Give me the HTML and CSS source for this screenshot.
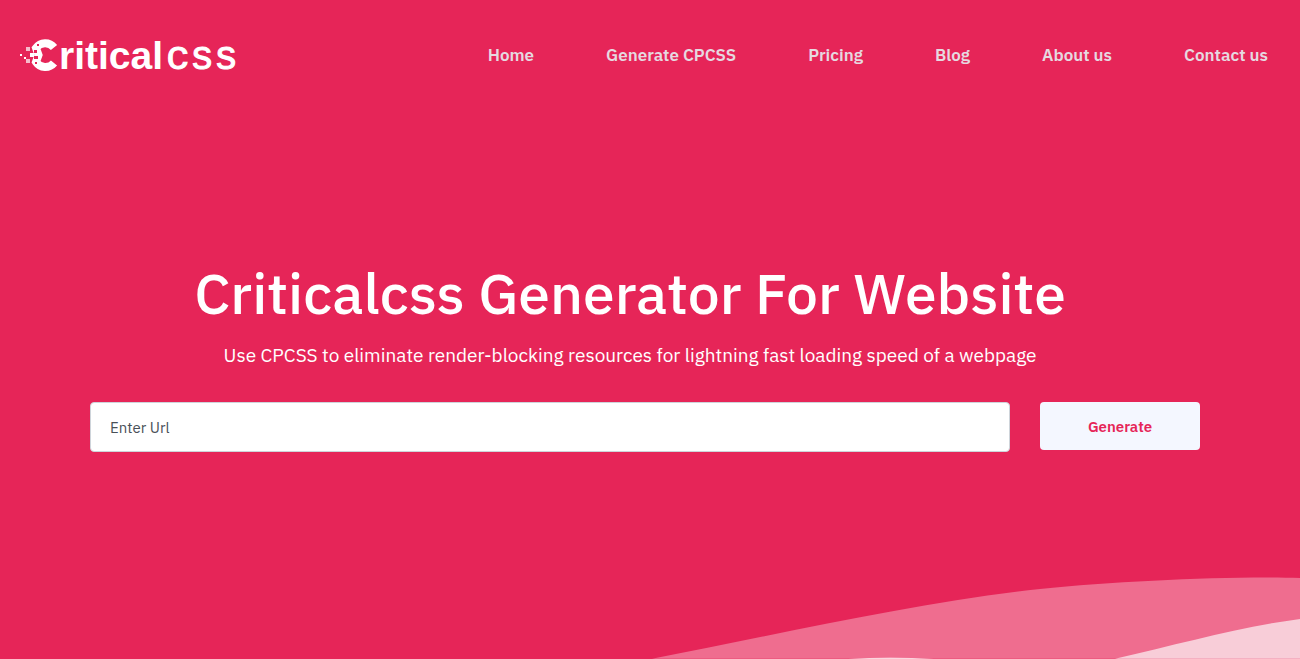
FILE: index.html
```html
<!DOCTYPE html>
<html lang="en">
<head>
  <meta charset="utf-8">
  <meta name="viewport" content="width=device-width, initial-scale=1">
  <title>Criticalcss Generator</title>
  <link rel="stylesheet" href="styles.css">
</head>
<body>
  <div class="page">
    <svg class="waves" viewBox="0 0 1300 99" preserveAspectRatio="none" aria-hidden="true">
      <path class="wave-back" d="M652 99C780 74 920 42 1040 29C1120 21 1230 16 1300 18V99Z"/>
      <path class="wave-mid" d="M1115 99C1180 84 1240 67 1300 59V99Z"/>
      <path class="wave-front" d="M848 99Q890 97 934 99Z"/>
    </svg>
    <header class="header">
      <a class="logo" href="#" aria-label="Criticalcss">
        <svg class="logo-art" viewBox="0 0 230 44">
          <path class="logo-arc" d="M34 12.500A11.500 12 0 0 0 16 13L18.500 20L16 27A11.500 12 0 0 0 34 28"/>
          <g class="logo-gap">
            <rect x="17" y="9" width="2" height="2"/>
            <rect x="14" y="15" width="3" height="3"/>
            <rect x="14" y="21" width="4" height="3"/>
            <rect x="15" y="27" width="2" height="2"/>
          </g>
          <rect class="logo-soft" x="6" y="12" width="4" height="4"/>
          <rect class="logo-soft" x="6" y="24" width="4" height="4"/>
          <g class="logo-solid">
            <rect x="0" y="19" width="2" height="2"/>
            <rect x="4" y="22" width="2" height="2"/>
            <rect x="10" y="18" width="4" height="4"/>
            <rect x="18" y="20" width="2" height="2"/>
          </g>
          <text class="logo-bold" x="39" y="34">ritical</text>
          <text class="logo-mono" x="146" y="34">css</text>
        </svg>
      </a>
      <nav class="nav">
        <a href="#">Home</a>
        <a href="#">Generate CPCSS</a>
        <a href="#">Pricing</a>
        <a href="#">Blog</a>
        <a href="#">About us</a>
        <a href="#">Contact us</a>
      </nav>
    </header>
    <main class="hero">
      <h1 class="title">Criticalcss Generator For Website</h1>
      <p class="lead">Use CPCSS to eliminate render-blocking resources for lightning fast loading speed of a webpage</p>
      <form class="form">
        <input class="field" type="url" aria-label="Enter Url" placeholder="Enter Url">
        <button class="submit" type="button">Generate</button>
      </form>
    </main>
  </div>
</body>
</html>
```
FILE: styles.css
```css
* {
  box-sizing: border-box;
}

body {
  margin: 0;
  background: #e62558;
  color: #fff;
  font-family: "IBM Plex Sans", Inter, "Noto Sans", sans-serif;
}

.page {
  position: relative;
  min-height: 100vh;
  overflow: hidden;
}

.waves {
  position: absolute;
  left: 0;
  bottom: 0;
  width: 100%;
  height: 15vh;
}

.wave-back { fill: #ef6d8f; }
.wave-mid { fill: #f8cdd8; }
.wave-front { fill: #fff; }

.header {
  position: relative;
  display: flex;
  align-items: center;
  justify-content: space-between;
  padding: 35px 32px 31px 20px;
}

.logo {
  display: block;
}

.logo-art {
  display: block;
  width: 230px;
  height: 44px;
  overflow: visible;
}

.logo-arc {
  fill: none;
  stroke: #fff;
  stroke-width: 8;
}

.logo-gap { fill: #e62558; }
.logo-soft { fill: #f6bccb; }
.logo-solid { fill: #fff; }

.logo-bold {
  fill: #fff;
  font: bold 39px "Liberation Sans", sans-serif;
}

.logo-mono {
  fill: #fff;
  stroke: #fff;
  stroke-width: 1;
  font: 40px "Liberation Mono", monospace;
}

.nav {
  display: flex;
  flex-wrap: wrap;
  gap: 20px 72px;
  padding-bottom: 4px;
}

.nav a {
  color: #e6d9e0;
  font-size: 17px;
  font-weight: 600;
  line-height: 24px;
  text-decoration: none;
}

.hero {
  position: relative;
  padding: 147px 100px 60px 60px;
  text-align: center;
}

.title {
  margin: 0;
  font-size: 57px;
  font-weight: 500;
  line-height: 72px;
}

.lead {
  margin: 12px 0 33px;
  font-size: 19px;
  line-height: 28px;
}

.form {
  display: flex;
  align-items: flex-start;
  gap: 30px;
  padding-left: 30px;
}

.field {
  flex: 1;
  min-width: 0;
  height: 50px;
  padding: 0 19px;
  border: 1px solid #ced4da;
  border-radius: 4px;
  background: #fff;
  color: #495057;
  font: 15px "IBM Plex Sans", Inter, "Noto Sans", sans-serif;
}

.field::placeholder {
  color: #495057;
  opacity: 1;
}

.submit {
  width: 160px;
  height: 48px;
  border: 0;
  border-radius: 4px;
  background: #f4f7ff;
  color: #e62558;
  font: 600 15px "IBM Plex Sans", Inter, "Noto Sans", sans-serif;
}
```
